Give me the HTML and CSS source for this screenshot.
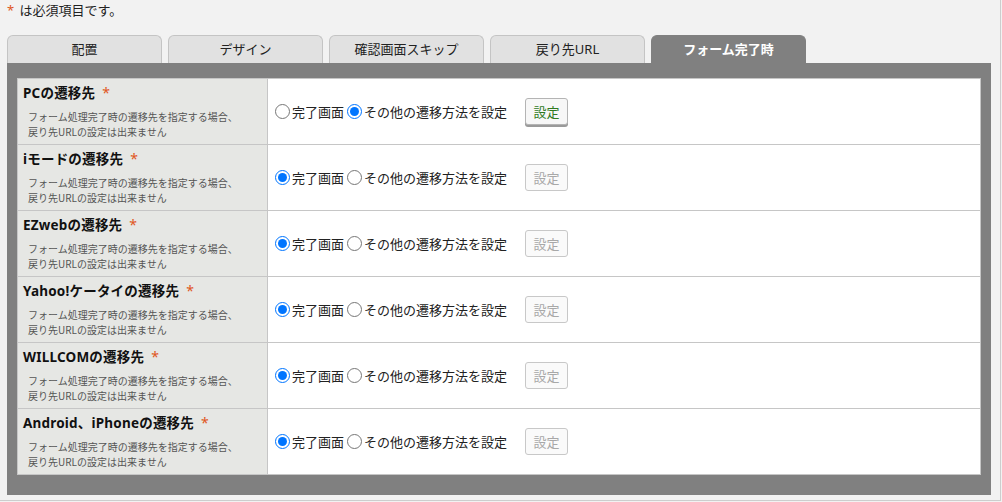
FILE: index.html
```html
<!DOCTYPE html>
<html lang="ja">
<head>
  <meta charset="UTF-8">
  <title>フォーム完了時</title>
  <link rel="stylesheet" href="styles.css">
</head>
<body>
<div class="page">
  <p class="required-note"><span class="req">*</span> は必須項目です。</p>
  <ul class="tabs">
    <li class="tab">配置</li>
    <li class="tab">デザイン</li>
    <li class="tab">確認画面スキップ</li>
    <li class="tab">戻り先URL</li>
    <li class="tab active">フォーム完了時</li>
  </ul>
  <div class="tab-panel">
    <table class="settings">
      <colgroup><col class="col-label"><col></colgroup>
      <tbody>
        <tr>
          <th>
            <div class="label-title">PCの遷移先<span class="req">*</span></div>
            <div class="label-note">フォーム処理完了時の遷移先を指定する場合、<br>戻り先URLの設定は出来ません</div>
          </th>
          <td>
            <div class="choice">
              <label><input type="radio" name="pc">完了画面</label>
              <label><input type="radio" name="pc" checked>その他の遷移方法を設定</label>
              <button class="set-btn">設定</button>
            </div>
          </td>
        </tr>
        <tr>
          <th>
            <div class="label-title">iモードの遷移先<span class="req">*</span></div>
            <div class="label-note">フォーム処理完了時の遷移先を指定する場合、<br>戻り先URLの設定は出来ません</div>
          </th>
          <td>
            <div class="choice">
              <label><input type="radio" name="imode" checked>完了画面</label>
              <label><input type="radio" name="imode">その他の遷移方法を設定</label>
              <button class="set-btn" disabled>設定</button>
            </div>
          </td>
        </tr>
        <tr>
          <th>
            <div class="label-title">EZwebの遷移先<span class="req">*</span></div>
            <div class="label-note">フォーム処理完了時の遷移先を指定する場合、<br>戻り先URLの設定は出来ません</div>
          </th>
          <td>
            <div class="choice">
              <label><input type="radio" name="ezweb" checked>完了画面</label>
              <label><input type="radio" name="ezweb">その他の遷移方法を設定</label>
              <button class="set-btn" disabled>設定</button>
            </div>
          </td>
        </tr>
        <tr>
          <th>
            <div class="label-title">Yahoo!ケータイの遷移先<span class="req">*</span></div>
            <div class="label-note">フォーム処理完了時の遷移先を指定する場合、<br>戻り先URLの設定は出来ません</div>
          </th>
          <td>
            <div class="choice">
              <label><input type="radio" name="yahoo" checked>完了画面</label>
              <label><input type="radio" name="yahoo">その他の遷移方法を設定</label>
              <button class="set-btn" disabled>設定</button>
            </div>
          </td>
        </tr>
        <tr>
          <th>
            <div class="label-title">WILLCOMの遷移先<span class="req">*</span></div>
            <div class="label-note">フォーム処理完了時の遷移先を指定する場合、<br>戻り先URLの設定は出来ません</div>
          </th>
          <td>
            <div class="choice">
              <label><input type="radio" name="willcom" checked>完了画面</label>
              <label><input type="radio" name="willcom">その他の遷移方法を設定</label>
              <button class="set-btn" disabled>設定</button>
            </div>
          </td>
        </tr>
        <tr>
          <th>
            <div class="label-title">Android、iPhoneの遷移先<span class="req">*</span></div>
            <div class="label-note">フォーム処理完了時の遷移先を指定する場合、<br>戻り先URLの設定は出来ません</div>
          </th>
          <td>
            <div class="choice">
              <label><input type="radio" name="smart" checked>完了画面</label>
              <label><input type="radio" name="smart">その他の遷移方法を設定</label>
              <button class="set-btn" disabled>設定</button>
            </div>
          </td>
        </tr>
      </tbody>
    </table>
  </div>
</div>
</body>
</html>
```

FILE: styles.css
```css
body {
  margin: 0;
  background: #f2f2f2;
  color: #222;
  font-family: "Noto Sans", "Noto Sans CJK JP", sans-serif;
  font-size: 13px;
}
.page {
  box-sizing: border-box;
  width: 1001px;
  height: 501px;
  padding: 0 9px 0 7px;
  border-right: 1px solid #cdcdcd;
  border-bottom: 1px solid #cdcdcd;
}
.required-note {
  margin: 0;
  padding-top: 2px;
  line-height: 16px;
}
.required-note .req { margin-right: 2px; }
.req { color: #e0561c; font-weight: normal; }
.tabs {
  display: flex;
  gap: 6px;
  list-style: none;
  margin: 17px 0 0;
  padding: 0;
}
.tab {
  box-sizing: border-box;
  width: 155px;
  height: 28px;
  line-height: 27px;
  text-align: center;
  background: #e1e1e1;
  border: 1px solid #c4c4c4;
  border-bottom: none;
  border-radius: 6px 6px 0 0;
  color: #222;
}
.tab.active {
  background: #808080;
  border-color: #808080;
  color: #fff;
  font-weight: bold;
}
.tab-panel {
  background: #808080;
  height: 432px;
  box-sizing: border-box;
  padding: 15px 10px 0;
}
.settings {
  width: 100%;
  table-layout: fixed;
  border-collapse: collapse;
  background: #fff;
}
.col-label { width: 250px; }
.settings th, .settings td {
  border: 1px solid #c6c6c6;
  height: 66px;
  box-sizing: border-box;
  padding: 0;
  vertical-align: middle;
}
.settings th {
  background: #e6e7e4;
  text-align: left;
  font-weight: normal;
  padding: 5px 6px 0 5px;
  vertical-align: top;
}
.label-title {
  font-weight: bold;
  font-size: 13.5px;
  letter-spacing: 0.2px;
  color: #111;
  line-height: 18px;
}
.label-title .req {
  margin-left: 7px;
  font-size: 14px;
}
.label-note {
  margin-top: 7px;
  padding-left: 5px;
  font-size: 10px;
  line-height: 15px;
  color: #555;
  font-family: "Noto Sans CJK JP", sans-serif;
}
.choice {
  display: flex;
  align-items: center;
  padding-left: 4px;
  padding-bottom: 1px;
}
.choice label {
  display: inline-flex;
  align-items: center;
  color: #222;
}
.choice input {
  width: 15px;
  height: 15px;
  margin: 0 2px 0 3px;
}
.set-btn {
  margin-left: 18px;
  width: 43px;
  height: 27px;
  padding: 0;
  font-family: inherit;
  font-size: 13px;
  background: #f7f7f7;
  color: #2f7a1f;
  border: 1px solid #b4b4b4;
  border-radius: 3px;
  box-shadow: 0 2px 0 #9a9a9a;
  cursor: pointer;
}
.set-btn:disabled {
  color: #a8a8a8;
  background: #fafafa;
  border-color: #c8c8c8;
  box-shadow: none;
  cursor: default;
}
```
